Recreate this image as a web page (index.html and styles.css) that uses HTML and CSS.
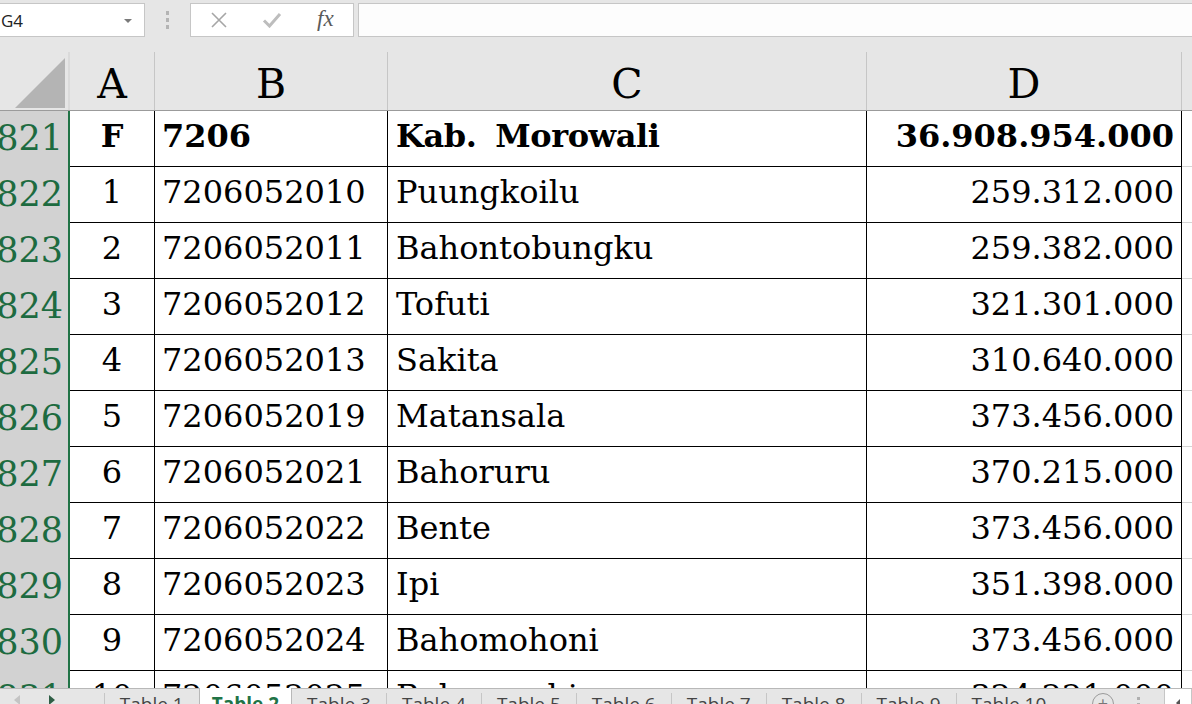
FILE: index.html
```html
<!DOCTYPE html>
<html>
<head>
<meta charset="utf-8">
<link rel="stylesheet" href="styles.css">
</head>
<body>
<div class="app">
  <div class="toolbar">
    <div class="namebox"><span class="name">G4</span><span class="dd"></span></div>
    <div class="grip"><i></i><i></i><i></i></div>
    <div class="fbtns">
      <svg class="ic-x" width="16" height="16" viewBox="0 0 16 16"><path d="M1 1L15 15M15 1L1 15" stroke="#a6a6a6" stroke-width="1.6" fill="none"/></svg>
      <svg class="ic-ok" width="20" height="16" viewBox="0 0 20 16"><path d="M2 8.5L7.5 14L18 2" stroke="#bdbdbd" stroke-width="3" fill="none"/></svg>
      <span class="fx">fx</span>
    </div>
    <div class="formula"></div>
  </div>

  <div class="sheet">
    <div class="row head">
      <div class="corner"><span class="tri"></span></div>
      <div class="ch">A</div>
      <div class="ch">B</div>
      <div class="ch">C</div>
      <div class="ch">D</div>
      <div class="ch last"></div>
    </div>
    <div class="row bold">
      <div class="rh"><span>1821</span></div>
      <div class="c ca">F</div>
      <div class="c cb">7206</div>
      <div class="c cc kab">Kab. Morowali</div>
      <div class="c cd">36.908.954.000</div>
      <div class="ce"></div>
    </div>
    <div class="row">
      <div class="rh"><span>1822</span></div>
      <div class="c ca">1</div>
      <div class="c cb">7206052010</div>
      <div class="c cc">Puungkoilu</div>
      <div class="c cd">259.312.000</div>
      <div class="ce"></div>
    </div>
    <div class="row">
      <div class="rh"><span>1823</span></div>
      <div class="c ca">2</div>
      <div class="c cb">7206052011</div>
      <div class="c cc">Bahontobungku</div>
      <div class="c cd">259.382.000</div>
      <div class="ce"></div>
    </div>
    <div class="row">
      <div class="rh"><span>1824</span></div>
      <div class="c ca">3</div>
      <div class="c cb">7206052012</div>
      <div class="c cc">Tofuti</div>
      <div class="c cd">321.301.000</div>
      <div class="ce"></div>
    </div>
    <div class="row">
      <div class="rh"><span>1825</span></div>
      <div class="c ca">4</div>
      <div class="c cb">7206052013</div>
      <div class="c cc">Sakita</div>
      <div class="c cd">310.640.000</div>
      <div class="ce"></div>
    </div>
    <div class="row">
      <div class="rh"><span>1826</span></div>
      <div class="c ca">5</div>
      <div class="c cb">7206052019</div>
      <div class="c cc">Matansala</div>
      <div class="c cd">373.456.000</div>
      <div class="ce"></div>
    </div>
    <div class="row">
      <div class="rh"><span>1827</span></div>
      <div class="c ca">6</div>
      <div class="c cb">7206052021</div>
      <div class="c cc">Bahoruru</div>
      <div class="c cd">370.215.000</div>
      <div class="ce"></div>
    </div>
    <div class="row">
      <div class="rh"><span>1828</span></div>
      <div class="c ca">7</div>
      <div class="c cb">7206052022</div>
      <div class="c cc">Bente</div>
      <div class="c cd">373.456.000</div>
      <div class="ce"></div>
    </div>
    <div class="row">
      <div class="rh"><span>1829</span></div>
      <div class="c ca">8</div>
      <div class="c cb">7206052023</div>
      <div class="c cc">Ipi</div>
      <div class="c cd">351.398.000</div>
      <div class="ce"></div>
    </div>
    <div class="row">
      <div class="rh"><span>1830</span></div>
      <div class="c ca">9</div>
      <div class="c cb">7206052024</div>
      <div class="c cc">Bahomohoni</div>
      <div class="c cd">373.456.000</div>
      <div class="ce"></div>
    </div>
    <div class="row">
      <div class="rh"><span>1831</span></div>
      <div class="c ca">10</div>
      <div class="c cb">7206052025</div>
      <div class="c cc">Bahomoahi</div>
      <div class="c cd">324.221.000</div>
      <div class="ce"></div>
    </div>
  </div>

  <div class="tabbar">
    <div class="nav">
      <svg width="10" height="12" viewBox="0 0 10 12"><path d="M8 1L2 6L8 11Z" fill="#c4c4c4"/></svg>
      <svg width="10" height="12" viewBox="0 0 10 12"><path d="M2 1L8 6L2 11Z" fill="#2e5e45"/></svg>
    </div>
    <div class="tab">Table 1</div>
    <div class="tab active">Table 2</div>
    <div class="tab">Table 3</div>
    <div class="tab">Table 4</div>
    <div class="tab">Table 5</div>
    <div class="tab">Table 6</div>
    <div class="tab">Table 7</div>
    <div class="tab">Table 8</div>
    <div class="tab">Table 9</div>
    <div class="tab">Table 10</div>
    <div class="add"><span class="plus">+</span></div>
    <div class="vdots"><i></i><i></i><i></i></div>
    <div class="scrollbox"><svg width="10" height="12" viewBox="0 0 10 12"><path d="M7 2L3 6L7 10Z" fill="#555"/></svg></div>
  </div>
</div>
</body>
</html>
```
FILE: styles.css
```css
* { box-sizing: border-box; }
html, body { margin: 0; padding: 0; }
body {
  width: 1192px;
  height: 704px;
  overflow: hidden;
  background: #e6e6e6;
  font-family: "DejaVu Serif", serif;
}
.app { display: flex; flex-direction: column; width: 1192px; }

/* toolbar */
.toolbar {
  height: 52px;
  display: flex;
  align-items: flex-start;
  padding-top: 3px;
  background: #e6e6e6;
}
.namebox {
  width: 145px;
  height: 34px;
  background: #fff;
  border: 1px solid #c6c6c6;
  border-left: none;
  display: flex;
  align-items: center;
  justify-content: space-between;
  padding: 0 12px 0 1px;
  font-family: "Open Sans", "Noto Sans", sans-serif;
  font-size: 17px;
  color: #222;
}
.dd {
  width: 0; height: 0;
  border-left: 4px solid transparent;
  border-right: 4px solid transparent;
  border-top: 4px solid #7a7a7a;
  margin-top: 2px;
}
.grip {
  width: 45px;
  height: 34px;
  display: flex;
  flex-direction: column;
  align-items: center;
  justify-content: center;
  gap: 3px;
}
.grip i { display: block; width: 3px; height: 4px; background: #b4b4b4; }
.fbtns {
  width: 164px;
  height: 34px;
  background: #fff;
  border: 1px solid #c6c6c6;
  display: flex;
  align-items: center;
  padding-left: 20px;
}
.ic-x { margin-right: 35px; }
.ic-ok { margin-right: 35px; }
.fx {
  font-family: "Liberation Serif", serif;
  font-style: italic;
  font-size: 23px;
  color: #5a5a5a;
  margin-top: -2px;
}
.formula {
  margin-left: 4px;
  flex: 1;
  height: 34px;
  background: #fdfdfd;
  border: 1px solid #c6c6c6;
  border-right: none;
}

/* sheet */
.sheet {
  height: 636px;
  overflow: hidden;
  background: #fff;
}
.row {
  display: grid;
  grid-template-columns: 70px 85px 233px 479px 315px 10px;
  height: 56px;
  font-size: 32px;
  color: #000;
}
.row.head {
  height: 59px;
  background: #e6e6e6;
  border-bottom: 1px solid #9b9b9b;
}
.corner {
  position: relative;
  border-right: 2px solid #dadada;
}
.tri {
  position: absolute;
  right: 3px;
  bottom: 2px;
  width: 0; height: 0;
  border-left: 50px solid transparent;
  border-bottom: 50px solid #b4b4b4;
}
.ch {
  border-right: 1px solid #c6c6c6;
  display: flex;
  align-items: center;
  justify-content: center;
  font-size: 41px;
  padding-top: 6px;
}
.ch.last { border-right: none; }
.rh {
  background: #d2d2d2;
  border-right: 2px solid #217346;
  color: #1d6b40;
  font-size: 35px;
  display: flex;
  justify-content: flex-end;
  align-items: center;
  overflow: hidden;
  padding-right: 5px;
  padding-bottom: 3px;
}
.c {
  border-right: 1px solid #000;
  border-bottom: 1px solid #000;
  display: flex;
  align-items: center;
  white-space: nowrap;
  overflow: hidden;
  padding-bottom: 5px;
}
.ca { justify-content: center; }
.cb { padding-left: 7px; }
.cc { padding-left: 8px; }
.cd { justify-content: flex-end; padding-right: 7px; }
.ce { border-bottom: 1px solid #d4d4d4; }
.bold .c { font-weight: bold; }
.kab { word-spacing: 8px; letter-spacing: -0.4px; }

/* tabs */
.tabbar {
  height: 30px;
  display: flex;
  align-items: stretch;
  background: #e6e6e6;
  border-top: 1px solid #b8b8b8;
  font-family: "Open Sans", "Noto Sans", sans-serif;
  font-size: 19px;
  color: #444;
}
.nav {
  width: 105px;
  display: flex;
  align-items: flex-start;
  padding: 5px 0 0 12px;
  gap: 25px;
}
.tab {
  border-left: 1px solid #c6c6c6;
  margin-top: 4px;
  padding: 0 15px;
  line-height: 22px;
  white-space: nowrap;
}
.tab.active {
  margin-top: -1px;
  background: #fff;
  color: #217346;
  font-weight: bold;
  border-left: 1px solid #b8b8b8;
  border-right: 1px solid #b8b8b8;
  padding: 5px 12px 0 12px;
}
.tab.active + .tab { border-left: none; }
.add {
  margin-left: 22px;
  width: 40px;
  display: flex;
  justify-content: center;
  padding-top: 4px;
}
.plus {
  width: 22px; height: 22px;
  border: 1px solid #9a9a9a;
  border-radius: 50%;
  font-size: 18px;
  line-height: 18px;
  text-align: center;
  color: #777;
}
.vdots {
  width: 32px;
  display: flex;
  flex-direction: column;
  align-items: center;
  padding-top: 8px;
  gap: 3px;
}
.vdots i { display: block; width: 3px; height: 3px; background: #b0b0b0; }
.scrollbox {
  margin-left: 10px;
  width: 28px;
  background: #fff;
  border-left: 1px solid #c6c6c6;
  border-right: 1px solid #c6c6c6;
  display: flex;
  justify-content: center;
  padding-top: 8px;
}
```
